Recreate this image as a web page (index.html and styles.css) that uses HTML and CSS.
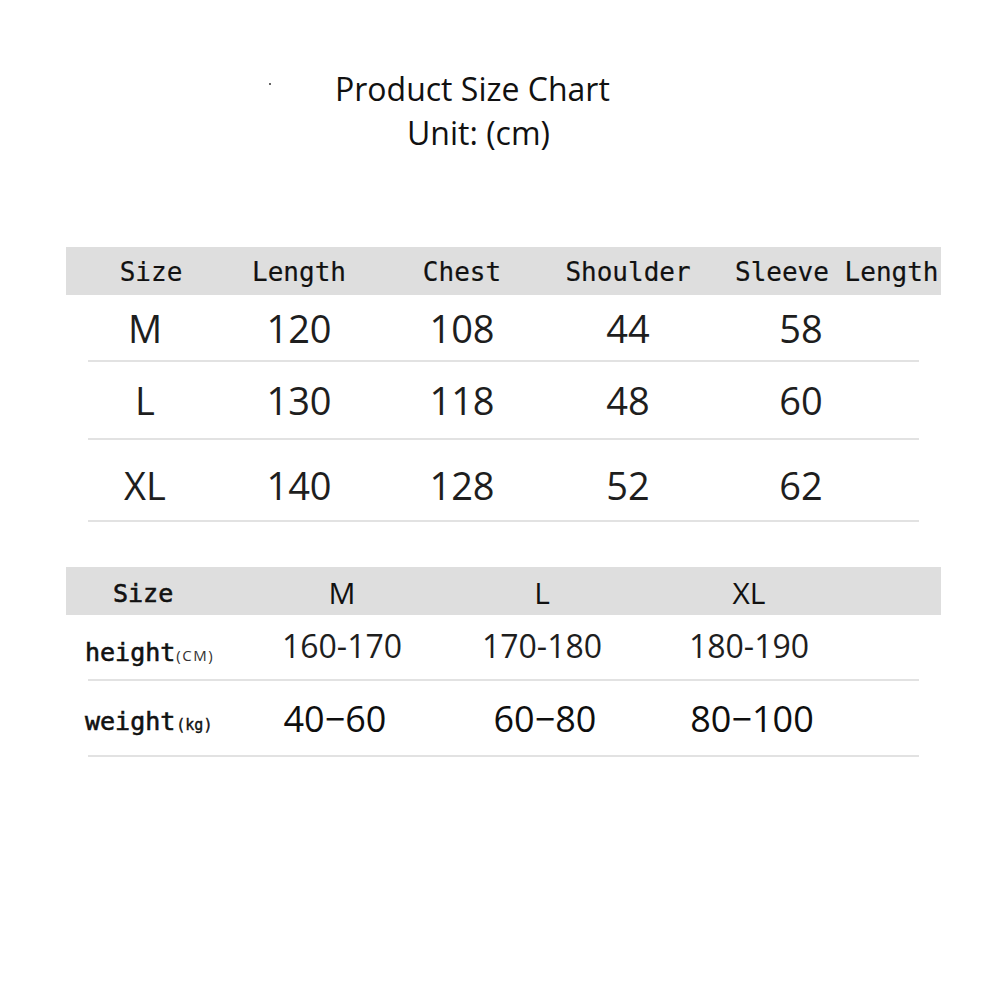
FILE: index.html
```html
<!DOCTYPE html>
<html lang="en">
<head>
<meta charset="utf-8">
<title>Product Size Chart</title>
<link rel="stylesheet" href="styles.css">
</head>
<body>
<div class="page">
  <header class="title">
    <span class="speck"></span>
    <h1 class="title-main">Product Size Chart</h1>
    <p class="title-unit">Unit: (cm)</p>
  </header>

  <section class="chart chart-size">
    <div class="head">
      <span class="h-cell h-first">Size</span>
      <span class="h-cell">Length</span>
      <span class="h-cell">Chest</span>
      <span class="h-cell">Shoulder</span>
      <span class="h-cell h-last">Sleeve Length</span>
    </div>
    <div class="row row-a">
      <span class="v-cell">M</span><span class="v-cell">120</span><span class="v-cell">108</span><span class="v-cell">44</span><span class="v-cell">58</span>
    </div>
    <div class="row row-b">
      <span class="v-cell">L</span><span class="v-cell">130</span><span class="v-cell">118</span><span class="v-cell">48</span><span class="v-cell">60</span>
    </div>
    <div class="row row-c">
      <span class="v-cell">XL</span><span class="v-cell">140</span><span class="v-cell">128</span><span class="v-cell">52</span><span class="v-cell">62</span>
    </div>
  </section>

  <section class="chart chart-body">
    <div class="head">
      <span class="h-cell h-label">Size</span>
      <span class="h-cell h-size">M</span>
      <span class="h-cell h-size">L</span>
      <span class="h-cell h-size">XL</span>
    </div>
    <div class="row row-h">
      <span class="label label-h">height<small class="unit">(CM)</small></span>
      <span class="v-cell v-mid">160-170</span><span class="v-cell v-mid">170-180</span><span class="v-cell v-mid">180-190</span>
    </div>
    <div class="row row-w">
      <span class="label label-w">weight<small class="unit unit-kg">(kg)</small></span>
      <span class="v-cell v-big v-w1">40−60</span><span class="v-cell v-big v-w2">60−80</span><span class="v-cell v-big v-w3">80−100</span>
    </div>
  </section>
</div>
</body>
</html>
```

FILE: styles.css
```css
html, body {
  margin: 0;
  padding: 0;
  background: #ffffff;
}

body {
  font-family: "Open Sans", "Noto Sans", sans-serif;
  color: #1e1e1e;
}

.page {
  width: 1000px;
  height: 1000px;
}

/* ---------- title ---------- */
.title {
  position: relative;
  padding: 67px 0 0 335px;
}

.speck {
  position: absolute;
  left: 269px;
  top: 83px;
  width: 2px;
  height: 2px;
  background: #666;
}

.title-main,
.title-unit {
  margin: 0;
  font-size: 32px;
  font-weight: 400;
  line-height: 44px;
  color: #111;
  white-space: nowrap;
}

.title-unit {
  margin-left: 72px;
}

/* ---------- charts ---------- */
.chart {
  margin-left: 66px;
  width: 875px;
}

.chart-size {
  margin-top: 92px;
}

.chart-body {
  margin-top: 45px;
}

.head {
  display: grid;
  align-items: center;
  height: 48px;
  background: #dedede;
}

.chart-size .head {
  grid-template-columns: 158px 150px 176px 156px 1fr;
}

.chart-body .head {
  grid-template-columns: 176px 200px 200px 214px;
}

.h-cell {
  text-align: center;
  white-space: nowrap;
  font-family: "DejaVu Sans Mono", "Liberation Mono", monospace;
  font-size: 26px;
  color: #111;
  padding-top: 2px;
  -webkit-text-stroke: 0.2px #111;
}

.h-first {
  padding-left: 12px;
}

.h-last {
  text-align: left;
  padding-left: 29px;
}

.h-label {
  text-align: left;
  padding-left: 47px;
  font-size: 25px;
  padding-top: 4px;
  -webkit-text-stroke: 0.6px #111;
}

.h-size {
  font-family: "Open Sans", "Noto Sans", sans-serif;
  font-size: 30px;
  -webkit-text-stroke: 0;
}

.row {
  display: grid;
  align-items: center;
  margin-left: 22px;
  width: 831px;
  border-bottom: 2px solid #e2e2e2;
  box-sizing: content-box;
}

.chart-size .row {
  grid-template-columns: 114px 194px 132px 200px 146px;
}

.chart-body .row {
  grid-template-columns: 154px 200px 200px 214px;
}

.row-a { height: 65px; }
.row-b { height: 76px; }
.row-c { height: 70px; padding-top: 10px; }
.row-h { height: 64px; }
.row-w { height: 74px; }

.v-cell {
  text-align: center;
  font-size: 38px;
  color: #1e1e1e;
}

.v-mid {
  font-size: 32px;
  padding-bottom: 4px;
}

.v-big {
  font-size: 36px;
  color: #0e0e0e;
}

.v-w1 { padding-right: 14px; }
.v-w2 { padding-left: 6px; }
.v-w3 { padding-left: 6px; }

.label {
  margin-left: -3px;
  white-space: nowrap;
  font-family: "DejaVu Sans Mono", "Liberation Mono", monospace;
  font-size: 25px;
  color: #111;
  -webkit-text-stroke: 0.6px #111;
}

.label-h { padding-top: 10px; }
.label-w { padding-top: 6px; }

.unit {
  font-size: 15px;
  font-family: "Open Sans", sans-serif;
  letter-spacing: 1.5px;
  color: #333;
  -webkit-text-stroke: 0;
  margin-left: 1px;
}

.unit-kg {
  font-family: "DejaVu Sans Mono", monospace;
  font-size: 15px;
  letter-spacing: 0;
  -webkit-text-stroke: 0.4px #111;
  color: #111;
}
```
